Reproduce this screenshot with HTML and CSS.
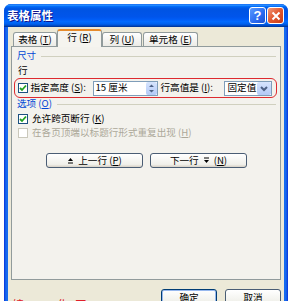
FILE: index.html
```html
<!DOCTYPE html>
<html lang="zh-CN">
<head>
    <meta charset="UTF-8">
    <title>表格属性</title>
    <link rel="stylesheet" href="styles.css">
</head>
<body>
    <div class="window">
        <div class="titlebar">
            <span class="title">表格属性</span>
            <div class="title-buttons">
                <span class="tbtn help">?</span>
                <span class="tbtn close">
                    <svg width="10" height="10" viewBox="0 0 10 10"><path d="M1.5 1.5 L8.5 8.5 M8.5 1.5 L1.5 8.5" stroke="#fff" stroke-width="2"/></svg>
                </span>
            </div>
        </div>
        <div class="frame">
            <div class="client">
                <div class="tabs">
                    <div class="tab t1">表格 (<u>T</u>)</div>
                    <div class="tab t2 active">行 (<u>R</u>)</div>
                    <div class="tab t3">列 (<u>U</u>)</div>
                    <div class="tab t4">单元格 (<u>E</u>)</div>
                </div>
                <div class="panel">
                    <div class="group-title"><span>尺寸</span><i class="rule"></i></div>
                    <div class="sub-label">行</div>
                    <div class="highlight">
                        <span class="check"><svg width="8" height="8" viewBox="0 0 8 8"><path d="M1 4 L3 6 L7 1.5" stroke="#21a121" stroke-width="1.8" fill="none"/></svg></span>
                        <span class="lbl lbl-height">指定高度 (<u>S</u>):</span>
                        <div class="spin-input">
                            <span class="val">15 厘米</span>
                            <span class="spin"><svg width="11" height="13" viewBox="0 0 11 13"><path d="M3 5 L5.5 2.5 L8 5 Z M3 8 L5.5 10.5 L8 8 Z" fill="#4d6185"/></svg></span>
                        </div>
                        <span class="lbl lbl-rule">行高值是 (<u>I</u>):</span>
                        <div class="select">
                            <span class="val">固定值</span>
                            <span class="drop"><svg width="14" height="13" viewBox="0 0 14 13"><path d="M4 5 L7 8 L10 5" stroke="#4d6185" stroke-width="2" fill="none"/></svg></span>
                        </div>
                    </div>
                    <div class="group-title"><span>选项 (<u>O</u>)</span><i class="rule"></i></div>
                    <div class="option">
                        <span class="check"><svg width="8" height="8" viewBox="0 0 8 8"><path d="M1 4 L3 6 L7 1.5" stroke="#21a121" stroke-width="1.8" fill="none"/></svg></span>
                        <span>允许跨页断行 (<u>K</u>)</span>
                    </div>
                    <div class="option disabled">
                        <span class="check"></span>
                        <span>在各页顶端以标题行形式重复出现 (<u>H</u>)</span>
                    </div>
                    <div class="nav-buttons">
                        <button class="btn">
                            <svg width="7" height="7" viewBox="0 0 7 7"><path d="M1 4 L3.5 1 L6 4 Z" fill="#000"/><path d="M1 6 H6" stroke="#000"/></svg>
                            <span class="btn-text">上一行 (<u>P</u>)</span>
                        </button>
                        <button class="btn">
                            <span class="btn-text">下一行</span>
                            <svg width="7" height="7" viewBox="0 0 7 7"><path d="M1 1 H6" stroke="#000"/><path d="M1 3 L3.5 6 L6 3 Z" fill="#000"/></svg>
                            <span>(<u>N</u>)</span>
                        </button>
                    </div>
                </div>
                <div class="footer">
                    <span class="note">编一 化工 ·</span>
                    <div class="footer-buttons">
                        <button class="btn default">确定</button>
                        <button class="btn">取消</button>
                    </div>
                </div>
            </div>
        </div>
    </div>
</body>
</html>
```

FILE: styles.css
```css
html, body {
    margin: 0;
    height: 301px;
    overflow: hidden;
    background: #ffffff;
}

body {
    font-family: "Noto Sans CJK SC", "Noto Sans", sans-serif;
    font-size: 9.6px;
    color: #000;
}

u {
    text-decoration: underline;
}

.window {
    margin: 4px 0 0 4px;
    width: 284px;
    height: 310px;
    border-radius: 7px 7px 0 0;
    overflow: hidden;
    display: flex;
    flex-direction: column;
    background: #0b4fd8;
}

.titlebar {
    height: 23px;
    display: flex;
    align-items: center;
    justify-content: space-between;
    padding: 0 4px 0 3px;
    background: linear-gradient(to bottom, #0058ee 0%, #3593ff 4%, #288eff 6%, #127dff 8%, #036ffc 10%, #0262ee 14%, #0057e5 20%, #0054e3 24%, #0055eb 56%, #005bf5 66%, #026afe 76%, #0062ef 86%, #0052d6 92%, #0040ab 96%, #003092 100%);
}

.title {
    color: #fff;
    font-weight: bold;
    font-size: 11.5px;
    text-shadow: 1px 1px 0 #0f1089;
    line-height: 1;
}

.title-buttons {
    display: flex;
    gap: 1px;
}

.tbtn {
    width: 15px;
    height: 15px;
    border: 1px solid #fff;
    border-radius: 3px;
    display: flex;
    align-items: center;
    justify-content: center;
    color: #fff;
    font-family: "Liberation Sans", sans-serif;
    font-weight: bold;
    font-size: 13px;
}

.help {
    background: linear-gradient(135deg, #5a9bff 0%, #2a6af0 60%, #1d4fd0 100%);
}

.close {
    background: linear-gradient(135deg, #f09a7c 0%, #e2572e 50%, #c73b16 100%);
}

.frame {
    flex: 1;
    padding: 0 4px;
    background: linear-gradient(to right, #0831d9 0, #166aee 2px, #166aee calc(100% - 2px), #0831d9 100%);
}

.client {
    height: 100%;
    background: #ece9d8;
    padding: 2px 3px 0 3px;
    box-sizing: border-box;
}

/* tab strip */
.tabs {
    height: 17px;
    display: flex;
    align-items: flex-end;
    padding-left: 2px;
}

.tab {
    height: 14px;
    box-sizing: border-box;
    border: 1px solid #919b9c;
    border-bottom: none;
    border-radius: 3px 3px 0 0;
    background: linear-gradient(#ffffff, #ecebe6);
    display: flex;
    align-items: center;
    justify-content: center;
    line-height: 1;
}

.t1 { width: 44px; }
.t2 { width: 45px; }
.t3 { width: 40px; margin-right: 1px; }
.t4 { width: 55px; }

.tab.active {
    height: 18px;
    margin-bottom: -1px;
    position: relative;
    z-index: 1;
    background: #f5f4ef;
    border-top: 2px solid #e68b2c;
    padding-bottom: 2px;
}

/* panel */
.panel {
    height: 234px;
    box-sizing: border-box;
    border: 1px solid #919b9c;
    background: #f3f2ed;
    padding: 3px 4px 0 5px;
}

.group-title {
    height: 12px;
    display: flex;
    align-items: center;
    color: #0046d5;
    line-height: 1;
}

.rule {
    flex: 1;
    height: 1px;
    background: #d0d0bf;
    margin-left: 5px;
}

.sub-label {
    height: 12px;
    margin: 2px 0 0 1px;
    line-height: 12px;
}

.highlight {
    height: 20px;
    box-sizing: border-box;
    margin: 2px 0 0 -3px;
    width: 263px;
    border: 1.5px solid #dd2a2f;
    border-radius: 6px;
    display: flex;
    align-items: center;
    padding-left: 2.5px;
}

.check {
    width: 10px;
    height: 10px;
    box-sizing: border-box;
    border: 1px solid #1c5180;
    background: #fff;
    display: flex;
    align-items: center;
    justify-content: center;
    flex-shrink: 0;
}

.lbl {
    line-height: 1;
    white-space: nowrap;
}

.lbl-height {
    width: 57px;
    margin: 0 5px 0 3px;
}

.lbl-rule {
    width: 57px;
    margin: 0 6px 0 3px;
}

.spin-input,
.select {
    height: 15px;
    box-sizing: border-box;
    border: 1px solid #7f9db9;
    background: #fff;
    display: flex;
    align-items: center;
    justify-content: space-between;
    line-height: 1;
}

.spin-input {
    width: 65px;
    padding-left: 2px;
}

.select {
    width: 48px;
    padding-left: 3px;
}

.spin,
.drop {
    height: 13px;
    display: flex;
    background: linear-gradient(#d6e4fd, #b3c9f7);
    border-radius: 2px;
}

.option {
    height: 12px;
    display: flex;
    align-items: center;
    gap: 4px;
    margin-left: 1px;
    line-height: 1;
}

.group-title + .option {
    margin-top: 3px;
}

.option + .option {
    margin-top: 2px;
}

.option.disabled {
    color: #aca899;
}

.option.disabled .check {
    border-color: #cac8bb;
}

.nav-buttons {
    margin-top: 14px;
    display: flex;
    justify-content: center;
    gap: 7px;
}

.btn {
    font: inherit;
    color: #000;
    height: 15px;
    box-sizing: border-box;
    border: 1px solid #4a5d74;
    border-radius: 3px;
    background: linear-gradient(#ffffff, #f0f0ea 80%, #d6d0c5);
    display: flex;
    align-items: center;
    justify-content: center;
    gap: 4px;
    padding: 0;
    line-height: 1;
}

.nav-buttons .btn {
    width: 97px;
}

.footer {
    display: flex;
    justify-content: space-between;
    padding-top: 9px;
}

.note {
    color: #e0202a;
    font-size: 12px;
    margin: 7px 0 0 1px;
    letter-spacing: 6px;
}

.footer-buttons {
    display: flex;
    gap: 8px;
}

.footer-buttons .btn {
    width: 56px;
    height: 17px;
}

.btn.default {
    border-color: #003c74;
    box-shadow: inset 0 0 0 1px #97b8ee;
}
```
